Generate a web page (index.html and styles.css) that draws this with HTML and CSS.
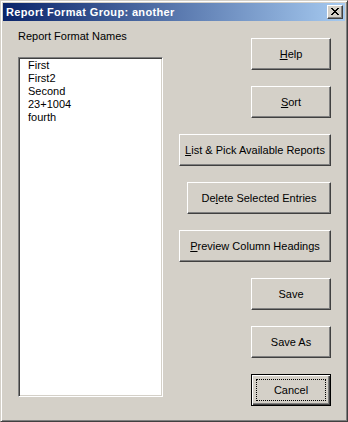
FILE: index.html
```html
<!DOCTYPE html>
<html lang="en">
<head>
  <meta charset="UTF-8">
  <title>Report Format Group: another</title>
  <link rel="stylesheet" href="styles.css">
</head>
<body>
  <div class="window">
    <div class="titlebar">
      <span class="title">Report Format Group: another</span>
      <button class="close-btn" aria-label="Close">
        <svg width="8" height="7" viewBox="0 0 8 7" shape-rendering="crispEdges">
          <path d="M0 0h2v1h-2z M6 0h2v1h-2z M1 1h2v1h-2z M5 1h2v1h-2z M2 2h4v1h-4z M3 3h2v1h-2z M2 4h4v1h-4z M1 5h2v1h-2z M5 5h2v1h-2z M0 6h2v1h-2z M6 6h2v1h-2z" fill="#000"/>
        </svg>
      </button>
    </div>

    <div class="dialog">
      <div class="names">
        <div class="label">Report Format Names</div>
        <ul class="listbox">
          <li>First</li>
          <li>First2</li>
          <li>Second</li>
          <li>23+1004</li>
          <li>fourth</li>
        </ul>
      </div>

      <div class="actions">
        <button class="btn"><u>H</u>elp</button>
        <button class="btn"><u>S</u>ort</button>
        <button class="btn wide"><u>L</u>ist &amp; Pick Available Reports</button>
        <button class="btn medium">De<u>l</u>ete Selected Entries</button>
        <button class="btn wide"><u>P</u>review Column Headings</button>
        <button class="btn">Save</button>
        <button class="btn">Save As</button>
        <button class="btn default"><span class="focus">Cancel</span></button>
      </div>
    </div>
  </div>
</body>
</html>
```

FILE: styles.css
```css
body {
  margin: 0;
  font-family: "Liberation Sans", Arial, sans-serif;
  font-size: 11px;
  color: #000;
}

.window {
  width: 348px;
  height: 422px;
  box-sizing: border-box;
  display: flex;
  flex-direction: column;
  background: #d4d0c8;
  border: 1px solid;
  border-color: #d4d0c8 #404040 #404040 #d4d0c8;
  box-shadow: inset 1px 1px #fff, inset -1px -1px #808080;
  padding: 2px;
}

.titlebar {
  height: 18px;
  display: flex;
  align-items: center;
  justify-content: space-between;
  padding: 0 2px 0 3px;
  background: linear-gradient(to right, #0a246a, #a6caf0);
}

.title {
  color: #fff;
  font-weight: bold;
  font-size: 11px;
  letter-spacing: 0.35px;
}

.close-btn {
  width: 16px;
  height: 14px;
  padding: 0;
  display: flex;
  align-items: center;
  justify-content: center;
  background: #d4d0c8;
  border: 1px solid;
  border-color: #fff #404040 #404040 #fff;
  box-shadow: inset -1px -1px #808080;
}

.close-btn svg {
  display: block;
  margin: 0 1px 1px 0;
}

.dialog {
  flex: 1;
  display: flex;
  justify-content: space-between;
}

.names {
  padding: 9px 0 0 15px;
}

.label {
  line-height: 13px;
  margin-bottom: 14px;
}

.listbox {
  list-style: none;
  margin: 0;
  width: 145px;
  height: 340px;
  box-sizing: border-box;
  padding: 0 0 0 8px;
  background: #fff;
  border: 1px solid;
  border-color: #808080 #fff #fff #808080;
  box-shadow: inset 1px 1px #404040, inset -1px -1px #d4d0c8;
}

.listbox li {
  line-height: 13px;
  padding-left: 1px;
}

.listbox li:first-child {
  margin-top: 1px;
}

.actions {
  display: flex;
  flex-direction: column;
  align-items: flex-end;
  gap: 16px;
  padding: 17px 14px 0 0;
}

.btn {
  width: 80px;
  height: 32px;
  padding: 0;
  font: inherit;
  color: #000;
  background: #d4d0c8;
  border: 1px solid;
  border-color: #fff #404040 #404040 #fff;
  box-shadow: inset -1px -1px #808080;
}

.btn.wide {
  width: 152px;
}

.btn.medium {
  width: 144px;
}

.btn.default {
  border-color: #000;
  box-shadow: inset 1px 1px #fff, inset -1px -1px #404040, inset -2px -2px #808080;
  display: flex;
  padding: 4px;
}

.focus {
  flex: 1;
  display: flex;
  align-items: center;
  justify-content: center;
  border: 1px dotted #000;
}
```
